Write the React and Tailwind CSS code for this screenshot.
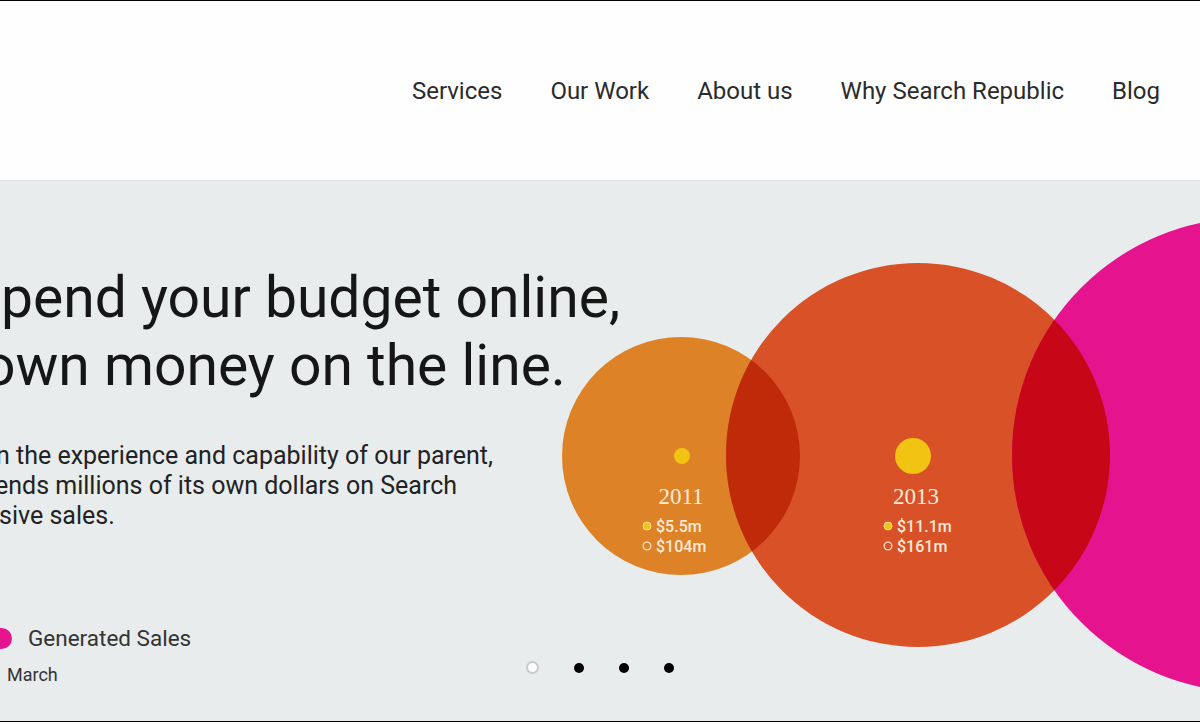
import React from "react";

const navItems = ["Services", "Our Work", "About us", "Why Search Republic", "Blog"];

function Chart() {
  return (
    <svg
      className="absolute inset-0"
      width="1200"
      height="540"
      viewBox="0 0 1200 540"
    >
      <defs>
        <clipPath id="clipRed">
          <circle cx="918" cy="274" r="192" />
        </clipPath>
      </defs>
      <circle cx="681" cy="275" r="119" fill="#dd8227" />
      <circle cx="918" cy="274" r="192" fill="#d95127" />
      <circle cx="1249" cy="274" r="237" fill="#e6138f" />
      <g clipPath="url(#clipRed)">
        <circle cx="681" cy="275" r="119" fill="#bf2b09" />
        <circle cx="1249" cy="274" r="237" fill="#c70717" />
      </g>

      {/* 2011 */}
      <circle cx="682" cy="275" r="8" fill="#f1c312" />
      <text x="681" y="323" textAnchor="middle" fill="#fdebd8" fontSize="23" fontFamily="'Liberation Serif', serif">
        2011
      </text>
      <circle cx="647" cy="345" r="4" fill="#f1c312" stroke="#f8e29a" strokeWidth="1" />
      <text x="656" y="351" fill="#fdebd8" fontSize="16" fontWeight="500" fontFamily="Roboto, sans-serif">
        $5.5m
      </text>
      <circle cx="647" cy="365" r="3.8" fill="none" stroke="#fde3c8" strokeWidth="1.3" />
      <text x="656" y="371" fill="#fdebd8" fontSize="16" fontWeight="500" fontFamily="Roboto, sans-serif">
        $104m
      </text>

      {/* 2013 */}
      <circle cx="913" cy="275" r="18" fill="#f1c312" />
      <text x="916" y="323" textAnchor="middle" fill="#fdebd8" fontSize="23" fontFamily="'Liberation Serif', serif">
        2013
      </text>
      <circle cx="888" cy="345" r="4" fill="#f1c312" stroke="#f8e29a" strokeWidth="1" />
      <text x="897" y="351" fill="#fdebd8" fontSize="16" fontWeight="500" fontFamily="Roboto, sans-serif">
        $11.1m
      </text>
      <circle cx="888" cy="365" r="3.8" fill="none" stroke="#fde3c8" strokeWidth="1.3" />
      <text x="897" y="371" fill="#fdebd8" fontSize="16" fontWeight="500" fontFamily="Roboto, sans-serif">
        $161m
      </text>
    </svg>
  );
}

export default function App() {
  return (
    <div className="w-[1200px] h-[725px] bg-white font-['Roboto',sans-serif] overflow-hidden">
      <div className="border-t border-black">
        <header className="h-[180px] bg-[#fefefe] border-b border-[#e1e4e6] flex items-center justify-end pr-[40px] gap-[48px]">
          {navItems.map((item) => (
            <a key={item} className="text-[24px] leading-none text-[#2b2b2b]">
              {item}
            </a>
          ))}
        </header>

        <section className="relative h-[540px] bg-[#e9eced] overflow-hidden">
          <Chart />

          <div className="relative pt-[83px] text-[#161616]">
            <h1 className="text-[57px] leading-[68px] font-normal">
              <span className="block ml-[1px]">pend your budget online,</span>
              <span className="block ml-[-17px]">own money on the line.</span>
            </h1>

            <p className="mt-[41px] text-[25px] leading-[30px] text-[#222]">
              <span className="block ml-[-4px]">n the experience and capability of our parent,</span>
              <span className="block ml-[-5px]">ends millions of its own dollars on Search</span>
              <span className="block ml-[-1px]">sive sales.</span>
            </p>

            <div className="mt-[93px] flex items-center gap-[16px] ml-[-9px]">
              <span className="w-[21px] h-[21px] rounded-full bg-[#e6138f]" />
              <span className="text-[22.5px] leading-[28px] text-[#333]">Generated Sales</span>
            </div>
            <div className="mt-[12px] ml-[7px] text-[18px] leading-[22px] text-[#333]">March</div>
          </div>

          <div className="absolute left-0 right-0 bottom-[47px] flex justify-center items-center gap-[35px]">
            <span className="w-[13px] h-[13px] rounded-full bg-white border-2 border-[#c9c9c9]" />
            <span className="w-[10px] h-[10px] rounded-full bg-black" />
            <span className="w-[10px] h-[10px] rounded-full bg-black" />
            <span className="w-[10px] h-[10px] rounded-full bg-black" />
          </div>
        </section>
        <div className="h-px bg-black" />
      </div>
    </div>
  );
}
